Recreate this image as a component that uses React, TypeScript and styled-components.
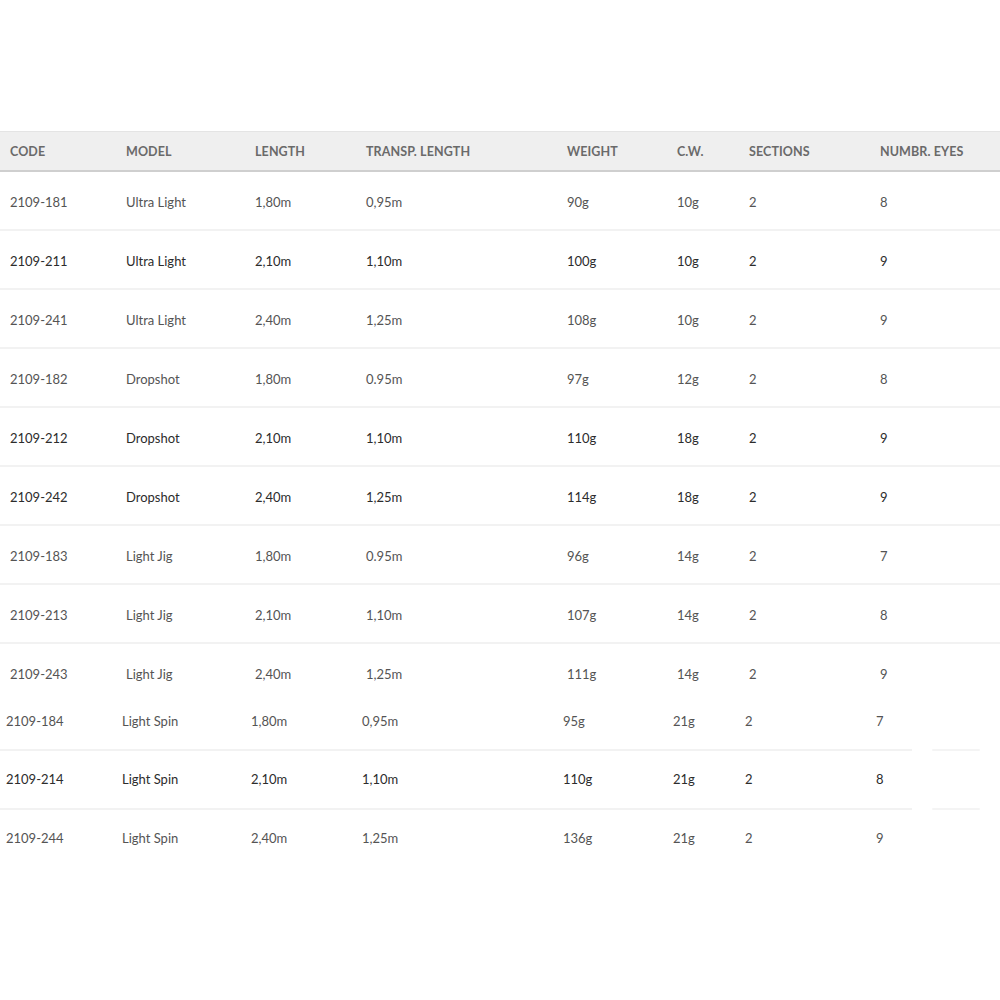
import React from "react";
import styled, { createGlobalStyle } from "styled-components";

type Rod = {
  code: string;
  model: string;
  length: string;
  transp: string;
  weight: string;
  cw: string;
  sections: string;
  eyes: string;
  dark?: boolean;
};

const columns = ["CODE", "MODEL", "LENGTH", "TRANSP. LENGTH", "WEIGHT", "C.W.", "SECTIONS", "NUMBR. EYES"];

const firstSheet: Rod[] = [
  { code: "2109-181", model: "Ultra Light", length: "1,80m", transp: "0,95m", weight: "90g", cw: "10g", sections: "2", eyes: "8" },
  { code: "2109-211", model: "Ultra Light", length: "2,10m", transp: "1,10m", weight: "100g", cw: "10g", sections: "2", eyes: "9", dark: true },
  { code: "2109-241", model: "Ultra Light", length: "2,40m", transp: "1,25m", weight: "108g", cw: "10g", sections: "2", eyes: "9" },
  { code: "2109-182", model: "Dropshot", length: "1,80m", transp: "0.95m", weight: "97g", cw: "12g", sections: "2", eyes: "8" },
  { code: "2109-212", model: "Dropshot", length: "2,10m", transp: "1,10m", weight: "110g", cw: "18g", sections: "2", eyes: "9", dark: true },
  { code: "2109-242", model: "Dropshot", length: "2,40m", transp: "1,25m", weight: "114g", cw: "18g", sections: "2", eyes: "9", dark: true },
  { code: "2109-183", model: "Light Jig", length: "1,80m", transp: "0.95m", weight: "96g", cw: "14g", sections: "2", eyes: "7" },
  { code: "2109-213", model: "Light Jig", length: "2,10m", transp: "1,10m", weight: "107g", cw: "14g", sections: "2", eyes: "8" },
  { code: "2109-243", model: "Light Jig", length: "2,40m", transp: "1,25m", weight: "111g", cw: "14g", sections: "2", eyes: "9" },
];

const secondSheet: Rod[] = [
  { code: "2109-184", model: "Light Spin", length: "1,80m", transp: "0,95m", weight: "95g", cw: "21g", sections: "2", eyes: "7" },
  { code: "2109-214", model: "Light Spin", length: "2,10m", transp: "1,10m", weight: "110g", cw: "21g", sections: "2", eyes: "8", dark: true },
  { code: "2109-244", model: "Light Spin", length: "2,40m", transp: "1,25m", weight: "136g", cw: "21g", sections: "2", eyes: "9" },
];

const cells = (r: Rod) => [r.code, r.model, r.length, r.transp, r.weight, r.cw, r.sections, r.eyes];

const App = () => {
  return (
    <>
      <GlobalStyle />
      <Page>
        <HeaderRow>
          {columns.map((c) => (
            <HeadCell key={c}>{c}</HeadCell>
          ))}
        </HeaderRow>
        <Sheet>
          {firstSheet.map((rod, i) => (
            <Row key={rod.code} $last={i === firstSheet.length - 1}>
              {cells(rod).map((v, j) => (
                <Cell key={j} $dark={rod.dark}>
                  {v}
                </Cell>
              ))}
            </Row>
          ))}
        </Sheet>
        <PastedSheet>
          {secondSheet.map((rod, i) => (
            <PastedRow key={rod.code} $first={i === 0}>
              {cells(rod).map((v, j) => (
                <Cell key={j} $dark={rod.dark}>
                  {v}
                </Cell>
              ))}
            </PastedRow>
          ))}
        </PastedSheet>
      </Page>
    </>
  );
};

const GlobalStyle = createGlobalStyle`
  *, *::before, *::after {
    box-sizing: border-box;
  }
  html, body {
    margin: 0;
    padding: 0;
    background: #ffffff;
  }
  body {
    font-family: Lato, "Open Sans", sans-serif;
  }
`;

const Page = styled.div`
  width: 1000px;
  height: 1000px;
  padding-top: 131px;
  background: #ffffff;
  overflow: hidden;
`;

const gridCols = "116px 129px 111px 201px 110px 72px 131px 1fr";

const HeaderRow = styled.div`
  display: grid;
  grid-template-columns: ${gridCols};
  align-items: center;
  height: 41px;
  padding-left: 10px;
  background: #efefef;
  border-top: 1px solid #e4e4e4;
  border-bottom: 2px solid #cfcfcf;
`;

const HeadCell = styled.div`
  font-size: 12.5px;
  font-weight: 700;
  color: #6a6a6a;
  letter-spacing: 0.1px;
  white-space: nowrap;
`;

const Sheet = styled.div`
  display: flex;
  flex-direction: column;
`;

const Row = styled.div<{ $last?: boolean }>`
  display: grid;
  grid-template-columns: ${gridCols};
  align-items: center;
  height: 59px;
  padding: 2px 0 0 10px;
  border-bottom: 2px solid ${({ $last }) => ($last ? "transparent" : "#f2f2f2")};
`;

const PastedSheet = styled.div`
  display: flex;
  flex-direction: column;
  width: 912px;
`;

const PastedRow = styled.div<{ $first?: boolean }>`
  position: relative;
  display: grid;
  grid-template-columns: ${gridCols};
  align-items: start;
  height: ${({ $first }) => ($first ? "46px" : "59px")};
  padding: ${({ $first }) => ($first ? "9px 0 0 6px" : "19px 0 0 6px")};
  border-top: ${({ $first }) => ($first ? "none" : "2px solid #f2f2f2")};

  &::before {
    content: "";
    display: ${({ $first }) => ($first ? "none" : "block")};
    position: absolute;
    top: -2px;
    left: 932px;
    width: 48px;
    height: 2px;
    background: #f4f4f4;
    border-radius: 2px;
  }
`;

const Cell = styled.div<{ $dark?: boolean }>`
  font-size: 13px;
  line-height: 18px;
  color: ${({ $dark }) => ($dark ? "#2c2c2c" : "#545454")};
  white-space: nowrap;
`;

export default App;
